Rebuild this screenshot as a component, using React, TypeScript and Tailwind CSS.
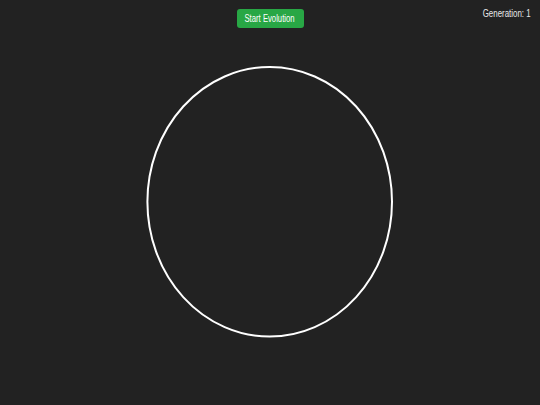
export default function App() {
  return (
    <div className="relative w-full h-[405px] overflow-hidden bg-[#222222] font-['Liberation_Sans',Arial,sans-serif]">
      {/* Canvas */}
      <svg className="block" width="540" height="405" viewBox="0 0 540 405">
        <ellipse cx="269.7" cy="201.8" rx="122.3" ry="134.8" fill="none" stroke="#ffffff" strokeWidth="2" />
      </svg>

      {/* Controls */}
      <div className="absolute top-[9px] left-0 right-0 flex justify-center">
        <button className="h-[19px] w-[67px] flex items-center justify-center rounded-[3px] bg-[#28a745] text-white">
          <span className="inline-block whitespace-nowrap text-[10px] leading-[12px] scale-x-[0.77]">
            Start Evolution
          </span>
        </button>
      </div>

      {/* Generation counter */}
      <div className="absolute top-[8px] right-[9px] text-[10px] leading-[12px] text-[#e8e8e8] whitespace-nowrap origin-right scale-x-[0.79]">
        Generation: 1
      </div>
    </div>
  );
}
